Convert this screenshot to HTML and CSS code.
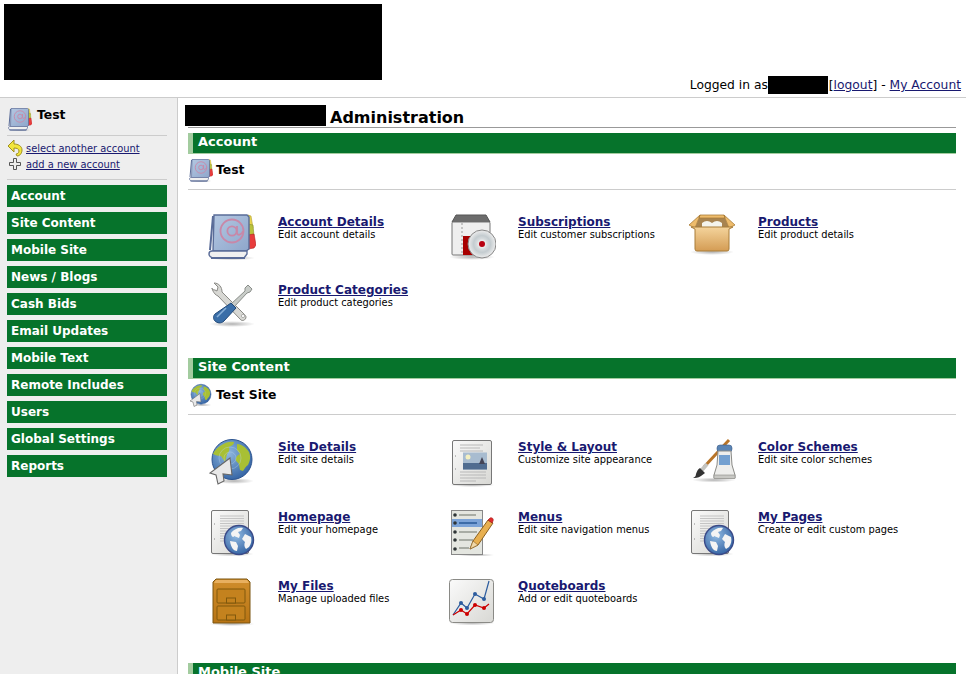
FILE: index.html
```html
<!DOCTYPE html>
<html lang="en">
<head>
    <meta charset="UTF-8">
    <title>Administration</title>
    <link rel="stylesheet" href="styles.css">
</head>
<body>

    <!-- shared icons -->
    <svg class="sprites" width="0" height="0">
        <defs>
            <linearGradient id="gBook" x1="0" y1="0" x2="1" y2="1"><stop offset="0" stop-color="#b4c8e2"/><stop offset="1" stop-color="#8ea6cb"/></linearGradient>
            <linearGradient id="gGrey" x1="0" y1="0" x2="1" y2="1"><stop offset="0" stop-color="#fafafa"/><stop offset="1" stop-color="#d8d8d4"/></linearGradient>
            <linearGradient id="gBox" x1="0" y1="0" x2="0" y2="1"><stop offset="0" stop-color="#f4d49c"/><stop offset="1" stop-color="#d49c54"/></linearGradient>
            <linearGradient id="gWood" x1="0" y1="0" x2="0" y2="1"><stop offset="0" stop-color="#d08e2c"/><stop offset="1" stop-color="#b87414"/></linearGradient>
            <radialGradient id="gSea" cx=".4" cy=".35" r=".75"><stop offset="0" stop-color="#8fb8e0"/><stop offset="1" stop-color="#2c5c9e"/></radialGradient>
            <radialGradient id="gDisc" cx=".5" cy=".5" r=".5"><stop offset="0" stop-color="#f4f4f4"/><stop offset=".6" stop-color="#c4ccd0"/><stop offset="1" stop-color="#eeeeee"/></radialGradient>
            <radialGradient id="gShadow"><stop offset="0" stop-color="#000" stop-opacity=".3"/><stop offset="1" stop-color="#000" stop-opacity="0"/></radialGradient>
        </defs>

        <symbol id="i-book" viewBox="0 0 48 48">
            <ellipse cx="24" cy="46" rx="23" ry="2.5" fill="url(#gShadow)"/>
            <path d="M40 3l3 1 2 12-5 1z" fill="#e8d44c" stroke="#b0a030" stroke-width=".6"/>
            <path d="M40 12l5 1 1 11-6 1z" fill="#b9c23c" stroke="#8a9030" stroke-width=".6"/>
            <path d="M40 23l6-1 2 11-2 3-6 1z" fill="#e83c3c" stroke="#b02020" stroke-width=".6"/>
            <path d="M6 3h33l2 2v32l-3 2H5z" fill="url(#gBook)" stroke="#5a6c98" stroke-width="1.4"/>
            <path d="M4 39h35v3l-3 4H6c-3 0-5-2-5-4 0-2 1-3 3-3z" fill="#f0f0f0" stroke="#5a6c98" stroke-width="1.4"/>
            <path d="M5 4L2 38" stroke="#5a6c98" stroke-width="2"/>
            <path d="M3 46h34" stroke="#5a6c98" stroke-width="2"/>
            <circle cx="24" cy="19" r="11.5" fill="none" stroke="#c888a8" stroke-width="1.8"/>
            <circle cx="24" cy="19" r="4.6" fill="none" stroke="#c888a8" stroke-width="1.8"/>
            <path d="M29 14v7c0 3 5 2 6-2" fill="none" stroke="#c888a8" stroke-width="1.8"/>
        </symbol>

        <symbol id="i-disc" viewBox="0 0 48 48">
            <ellipse cx="24" cy="45" rx="23" ry="3" fill="url(#gShadow)"/>
            <path d="M4 10l4-7h30l4 7z" fill="#6c6c6c" stroke="#555"/>
            <rect x="4" y="10" width="38" height="33" rx="1" fill="#efefef" stroke="#777"/>
            <path d="M14 11v31" stroke="#999" stroke-width="1" stroke-dasharray="2 2"/>
            <rect x="15" y="24" width="14" height="19" fill="#a80000"/>
            <circle cx="34" cy="32" r="14" fill="url(#gDisc)" stroke="#888"/>
            <circle cx="34" cy="32" r="4.500" fill="#e8e8e8"/>
            <circle cx="34" cy="32" r="3" fill="#b80010"/>
        </symbol>

        <symbol id="i-box" viewBox="0 0 48 48">
            <ellipse cx="24" cy="40" rx="22" ry="3" fill="url(#gShadow)"/>
            <path d="M11 6h26l4 10H7z" fill="#a88450"/>
            <path d="M14 11q5-4 10 0q5-4 10 0v4H14z" fill="#f4f4ec"/>
            <path d="M12 3h24l1 3H11zM36 3l11 10-6 3-4-10zM12 3L1 13l6 3 4-10z" fill="#eebc6c" stroke="#a87c38" stroke-width=".8"/>
            <path d="M3 15h42l-4 2v20a2 2 0 01-2 2H9a2 2 0 01-2-2V17z" fill="url(#gBox)" stroke="#a87c38"/>
        </symbol>

        <symbol id="i-tools" viewBox="0 0 48 48">
            <ellipse cx="24" cy="44" rx="23" ry="3" fill="url(#gShadow)"/>
            <path d="M7 10c-2 0-3-1-3-2 0 0 1 6 6 8l22 23c2 3 6 1 6-2 0-1-1-2-2-3L14 12c0-5-3-9-8-9l4 4-1 4z" fill="#d8d8d4" stroke="#8a8a86"/>
            <circle cx="35" cy="36" r="1.6" fill="#fff" stroke="#8a8a86" stroke-width=".6"/>
            <path d="M40 5l4 4-2 3-3 1-13 14-3-3 14-13v-3z" fill="#c8ccc8" stroke="#8a8e8a"/>
            <path d="M23 23l5 5-12 13c-3 3-7 2-9 0s-2-5 0-7z" fill="#3a6ea8" stroke="#204878"/>
            <path d="M9 37l9-9" stroke="#88b0d8" stroke-width="1.6"/>
        </symbol>

        <symbol id="i-globe" viewBox="0 0 48 48">
            <ellipse cx="26" cy="44" rx="20" ry="3" fill="url(#gShadow)"/>
            <circle cx="24" cy="22.500" r="20" fill="url(#gSea)" stroke="#2c5490"/>
            <path d="M12 9c5-4 11-5 14-4 0 3-3 4-5 5 1 3 0 5-2 7l-2 8-4-6c-3 0-6-1-8-2 1-3 4-6 7-8zM29 7c4 0 9 3 12 8 2 5 1 9-1 13-2 1-3 3-5 6l-3-1c-1-4 0-6-3-8-3-3 0-7 3-8l-3-4z" fill="#a8c034"/>
            <circle cx="22" cy="21" r="6" fill="none" stroke="#bcd4ec" stroke-width=".6" stroke-opacity=".6"/>
            <circle cx="22" cy="21" r="11" fill="none" stroke="#bcd4ec" stroke-width=".6" stroke-opacity=".6"/>
            <path d="M22 21L2 36l6 2 2 9 6-3-1-7 9 1z" fill="#e8e8e8" stroke="#666" stroke-width="1.100"/>
        </symbol>

        <symbol id="i-docimg" viewBox="0 0 48 48">
            <ellipse cx="24" cy="46" rx="23" ry="2" fill="url(#gShadow)"/>
            <rect x="4.5" y="1.500" width="39" height="44" rx="1.500" fill="url(#gGrey)" stroke="#777"/>
            <path d="M12 6h23M12 9h20M12 12h23M12 33h26M12 36h26M12 39h26M12 42h16" stroke="#b8b8b8" stroke-width="1.100"/>
            <rect x="15" y="13.500" width="24" height="17" fill="#a8bcd0"/>
            <rect x="15" y="24" width="24" height="6.500" fill="#506c90"/>
            <circle cx="20" cy="18" r="2.500" fill="#f4f0c0"/>
            <path d="M31 25l3-7 3 7z" fill="#445"/>
            <path d="M7 17h1M7 30h1" stroke="#888"/>
        </symbol>

        <symbol id="i-brush" viewBox="0 0 48 48">
            <ellipse cx="26" cy="43" rx="22" ry="2.500" fill="url(#gShadow)"/>
            <path d="M41 3L16 30" stroke="#b87428" stroke-width="3"/>
            <path d="M19 27l-6 7" stroke="#c4c4c0" stroke-width="4"/>
            <path d="M12 31l5 5-4 3c-3 2-6 2-8 2 2-1 3-2 3-4 1-3 2-5 4-6z" fill="#333"/>
            <rect x="29" y="8" width="15" height="7" rx="3" fill="#5a84b4" stroke="#3c5c88" stroke-width=".6"/>
            <path d="M30 14h13l1 14 3 10v3H26v-3l3-10z" fill="#eeeeec" stroke="#8a8a86"/>
            <rect x="31" y="18" width="11" height="10" fill="#74a0d0"/>
            <rect x="26" y="38" width="21" height="3.500" fill="#c8c8c4" stroke="#8a8a86" stroke-width=".6"/>
        </symbol>

        <symbol id="i-docglobe" viewBox="0 0 48 48">
            <ellipse cx="24" cy="45" rx="22" ry="2.500" fill="url(#gShadow)"/>
            <rect x="3.500" y="1.500" width="37" height="43" rx="1.500" fill="url(#gGrey)" stroke="#777"/>
            <path d="M12 7h24M12 9.500h24M12 12h24M12 14.500h24M12 17h24M12 19.500h24M12 22h16M12 24.500h12M12 27h11M12 29.500h10M12 32h10" stroke="#c4c4c4" stroke-width="1.200"/>
            <path d="M6 15h1M6 30h1" stroke="#888"/>
            <circle cx="31" cy="31" r="14.500" fill="url(#gSea)" stroke="#3a4a88" stroke-width="1.400"/>
            <path d="M23 24c3-4 8-6 12-5l-2 3-3 1 2 3-1 3-5-2c0 2-3 1-3-3zM37 25l6 3c1 4 0 7-2 10l-3 2c-2-2-2-5-1-7l-3-3zM22 32l6 1 2 4-1 5c-3 0-6-3-7-10z" fill="#f4f4f4"/>
        </symbol>

        <symbol id="i-menu" viewBox="0 0 48 48">
            <ellipse cx="28" cy="46" rx="19" ry="1.500" fill="url(#gShadow)"/>
            <rect x="3.500" y="1.500" width="31" height="44" fill="#e4e6e0" stroke="#888"/>
            <rect x="4" y="10" width="30" height="8" fill="#7ca4d8"/>
            <path d="M11 6h17M11 14h18M11 23h18M11 31h14M11 39h10" stroke="#a8aca4" stroke-width="2"/>
            <path d="M11 14h18" stroke="#3c6ca8" stroke-width="2"/>
            <g fill="#2e3436"><circle cx="7" cy="6" r="1.800"/><circle cx="7" cy="14" r="1.800"/><circle cx="7" cy="23" r="1.800"/><circle cx="7" cy="31" r="1.800"/><circle cx="7" cy="40" r="1.800"/></g>
            <path d="M22 40l3-8 15-21 5 3-15 22z" fill="#e8b050" stroke="#8a6020"/>
            <path d="M22 40l3-8 5 4z" fill="#f0d8a8" stroke="#8a6020" stroke-width=".6"/>
            <path d="M40 11l2-2c2-1 4 1 3 3l-1 2z" fill="#e02c2c" stroke="#a01818" stroke-width=".6"/>
        </symbol>

        <symbol id="i-cabinet" viewBox="0 -1 48 48">
            <ellipse cx="24" cy="45" rx="23" ry="2" fill="url(#gShadow)"/>
            <path d="M8 0h31l3 3v41H5V3z" fill="url(#gWood)" stroke="#7a5410"/>
            <path d="M8 1h31l2 3H6z" fill="#e8b060"/>
            <rect x="9" y="10" width="28" height="14" rx="1" fill="#c4821e" stroke="#80580c"/>
            <rect x="9" y="27" width="28" height="14" rx="1" fill="#c4821e" stroke="#80580c"/>
            <rect x="18.500" y="19" width="9" height="5" fill="#c4821e" stroke="#80580c"/>
            <rect x="18.500" y="36" width="9" height="5" fill="#c4821e" stroke="#80580c"/>
        </symbol>

        <symbol id="i-chart" viewBox="0 0 48 48">
            <ellipse cx="24" cy="45" rx="23" ry="2.500" fill="url(#gShadow)"/>
            <rect x="1.500" y="1.500" width="44" height="43" rx="3" fill="url(#gGrey)" stroke="#8a8a86"/>
            <path d="M5 37l8-12 6 5 8-14 9 5 5-18" fill="none" stroke="#2c5c9e" stroke-width="1.200"/>
            <path d="M5 37l8-5 6 4 8-9 9 3 5-4" fill="none" stroke="#cc0000" stroke-width="1.200"/>
            <g fill="#2c5c9e"><circle cx="13" cy="25" r="2"/><circle cx="19" cy="30" r="2"/><circle cx="27" cy="16" r="2"/><circle cx="36" cy="21" r="2"/></g>
            <g fill="#cc0000"><circle cx="13" cy="32" r="2"/><circle cx="19" cy="36" r="2"/><circle cx="27" cy="27" r="2"/><circle cx="36" cy="30" r="2"/></g>
        </symbol>
    </svg>

    <header class="top">
        <div class="logo"></div>
        <div class="login">
            Logged in as<span class="hidden-name"></span> [<a href="#">logout</a>] - <a href="#">My Account</a>
        </div>
    </header>

    <div class="page">

        <!-- Left menu -->
        <aside class="side">
            <div class="current">
                <svg class="icon-small"><use href="#i-book"/></svg>
                <b>Test</b>
            </div>
            <div class="acct-links">
                <div class="acct-link">
                    <svg width="16" height="18" viewBox="0 0 16 18"><path d="M7 1L1 7l6 6V9c3 0 5 1 5 3 0 2-2 3-3 3l1 2c3 0 5-3 5-6 0-4-4-6-8-6z" fill="#f2e63c" stroke="#a09020"/></svg>
                    <a href="#">select another account</a>
                </div>
                <div class="acct-link">
                    <svg width="16" height="16" viewBox="0 0 16 16"><path d="M6.500 2.500h3v4h4v3h-4v4h-3v-4h-4v-3h4z" fill="#eeeeec" stroke="#555"/></svg>
                    <a href="#">add a new account</a>
                </div>
            </div>
            <nav class="menu">
                <a href="#">Account</a>
                <a href="#">Site Content</a>
                <a href="#">Mobile Site</a>
                <a href="#">News / Blogs</a>
                <a href="#">Cash Bids</a>
                <a href="#">Email Updates</a>
                <a href="#">Mobile Text</a>
                <a href="#">Remote Includes</a>
                <a href="#">Users</a>
                <a href="#">Global Settings</a>
                <a href="#">Reports</a>
            </nav>
        </aside>

        <main class="main">
            <h1 class="title"><span class="hidden-title"></span> Administration</h1>

            <section class="section">
                <h2 class="bar">Account</h2>
                <div class="subject">
                    <svg class="icon-small"><use href="#i-book"/></svg>
                    <b>Test</b>
                </div>
                <div class="tools">
                    <div class="tool">
                        <svg class="icon"><use href="#i-book"/></svg>
                        <div><a href="#">Account Details</a><p>Edit account details</p></div>
                    </div>
                    <div class="tool">
                        <svg class="icon"><use href="#i-disc"/></svg>
                        <div><a href="#">Subscriptions</a><p>Edit customer subscriptions</p></div>
                    </div>
                    <div class="tool">
                        <svg class="icon"><use href="#i-box"/></svg>
                        <div><a href="#">Products</a><p>Edit product details</p></div>
                    </div>
                    <div class="tool">
                        <svg class="icon"><use href="#i-tools"/></svg>
                        <div><a href="#">Product Categories</a><p>Edit product categories</p></div>
                    </div>
                </div>
            </section>

            <section class="section">
                <h2 class="bar">Site Content</h2>
                <div class="subject">
                    <svg class="icon-small"><use href="#i-globe"/></svg>
                    <b>Test Site</b>
                </div>
                <div class="tools tools-site">
                    <div class="tool">
                        <svg class="icon"><use href="#i-globe"/></svg>
                        <div><a href="#">Site Details</a><p>Edit site details</p></div>
                    </div>
                    <div class="tool">
                        <svg class="icon low"><use href="#i-docimg"/></svg>
                        <div><a href="#">Style &amp; Layout</a><p>Customize site appearance</p></div>
                    </div>
                    <div class="tool">
                        <svg class="icon"><use href="#i-brush"/></svg>
                        <div><a href="#">Color Schemes</a><p>Edit site color schemes</p></div>
                    </div>
                    <div class="tool">
                        <svg class="icon low"><use href="#i-docglobe"/></svg>
                        <div><a href="#">Homepage</a><p>Edit your homepage</p></div>
                    </div>
                    <div class="tool">
                        <svg class="icon low"><use href="#i-menu"/></svg>
                        <div><a href="#">Menus</a><p>Edit site navigation menus</p></div>
                    </div>
                    <div class="tool">
                        <svg class="icon low"><use href="#i-docglobe"/></svg>
                        <div><a href="#">My Pages</a><p>Create or edit custom pages</p></div>
                    </div>
                    <div class="tool">
                        <svg class="icon low"><use href="#i-cabinet"/></svg>
                        <div><a href="#">My Files</a><p>Manage uploaded files</p></div>
                    </div>
                    <div class="tool">
                        <svg class="icon low"><use href="#i-chart"/></svg>
                        <div><a href="#">Quoteboards</a><p>Add or edit quoteboards</p></div>
                    </div>
                </div>
            </section>

            <section class="section">
                <h2 class="bar">Mobile Site</h2>
            </section>
        </main>
    </div>

</body>
</html>
```

FILE: styles.css
```css
html, body {
    height: 100%;
    overflow: hidden;
}

body {
    margin: 0;
    font-family: "DejaVu Sans", Verdana, sans-serif;
    font-size: 12px;
    color: #000;
    background-color: #fff;
    display: flex;
    flex-direction: column;
}

a {
    color: #191970;
}

.sprites {
    position: absolute;
}

/* Top */
.top {
    height: 97px;
    flex-shrink: 0;
    display: flex;
    justify-content: space-between;
    align-items: flex-end;
    border-bottom: 1px solid #ccc;
}

.logo {
    width: 378px;
    height: 76px;
    margin: 0 0 17px 4px;
    background: #000;
}

.login {
    margin: 0 5px 3px 0;
    font-size: 12.3px;
    line-height: 18px;
}

.hidden-name {
    display: inline-block;
    width: 60px;
    height: 18px;
    margin-right: -3px;
    vertical-align: top;
    background: #000;
}

/* Left menu */
.page {
    flex: 1;
    display: flex;
    min-height: 0;
}

.side {
    width: 178px;
    flex-shrink: 0;
    box-sizing: border-box;
    padding: 0 10px 0 7px;
    background-color: #eee;
    border-right: 1px solid #ccc;
}

.current {
    display: flex;
    align-items: flex-start;
    gap: 5px;
    height: 38px;
    padding: 9px 0 0 1px;
    box-sizing: border-box;
    border-bottom: 1px solid #ccc;
}

.current b {
    font-size: 12.4px;
    line-height: 16px;
}

.icon-small {
    width: 24px;
    height: 24px;
    flex-shrink: 0;
}

.acct-links {
    padding: 4px 0 7px;
    border-bottom: 1px solid #ccc;
    font-size: 9.9px;
}

.acct-link {
    display: flex;
    align-items: center;
    gap: 3px;
    height: 16px;
}

.menu {
    margin-top: 5px;
    display: flex;
    flex-direction: column;
    gap: 5px;
}

.menu a {
    height: 22px;
    line-height: 22px;
    padding-left: 4px;
    background-color: #06732b;
    color: #fff;
    font-weight: bold;
    text-decoration: none;
}

/* Content */
.main {
    flex: 1;
    min-width: 0;
    padding: 7px 10px 0 7px;
}

.title {
    margin: 0 0 0 3px;
    height: 22px;
    font-size: 16px;
    line-height: 25px;
    display: flex;
    gap: 4px;
    border-bottom: 1px solid #999;
}

.hidden-title {
    width: 141px;
    height: 21px;
    margin-left: -3px;
    background: #000;
}

.section {
    margin-left: 3px;
    margin-bottom: 30px;
}

.bar {
    margin: 5px 0 0;
    height: 20px;
    padding-left: 5px;
    border-left: 5px solid #a3cc9f;
    border-bottom: 1px solid #a3cc9f;
    background-color: #06732b;
    color: #fff;
    font-size: 13px;
    line-height: 18px;
}

.section + .section .bar {
    margin-top: 0;
}

.subject {
    display: flex;
    align-items: flex-start;
    gap: 3px;
    height: 31px;
    padding: 4px 0 0 1px;
    border-bottom: 1px solid #ccc;
}

.subject b {
    font-size: 12.4px;
    line-height: 24px;
}

.tools {
    display: grid;
    grid-template-columns: repeat(3, 240px);
    row-gap: 20px;
    padding: 22px 0 0 20px;
}

.tools-site {
    row-gap: 21.5px;
    padding-bottom: 9px;
}

.tool {
    display: flex;
    gap: 22px;
    height: 48px;
}

.icon {
    width: 48px;
    height: 48px;
    flex-shrink: 0;
}

.icon.low {
    margin-top: 2px;
}

.tool a {
    display: block;
    margin-top: 3px;
    font-weight: bold;
    line-height: 14px;
}

.tool p {
    margin: 0;
    font-size: 9.85px;
    line-height: 11px;
}
```
